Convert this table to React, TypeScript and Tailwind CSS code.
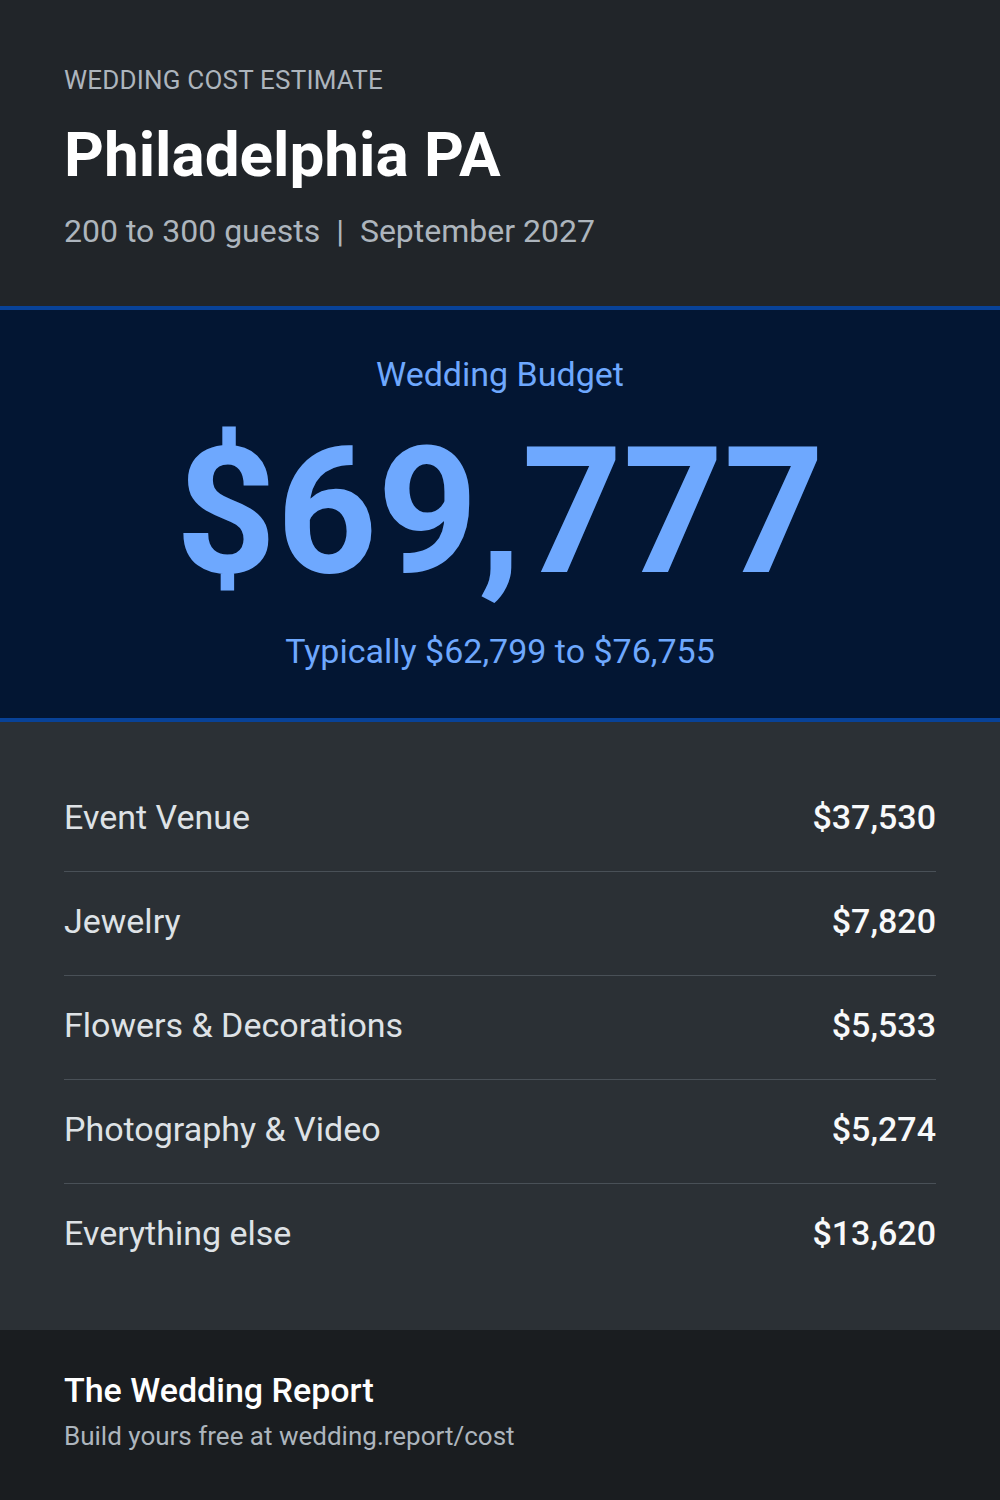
import React from 'react';

const items = [
    { label: 'Event Venue', amount: '$37,530' },
    { label: 'Jewelry', amount: '$7,820' },
    { label: 'Flowers & Decorations', amount: '$5,533' },
    { label: 'Photography & Video', amount: '$5,274' },
    { label: 'Everything else', amount: '$13,620' },
];

const App: React.FC = () => {
    return (
        <div className="w-[1000px] h-[1500px] flex flex-col font-['Roboto',sans-serif] bg-[#212529]">
            <header className="px-16 pt-16 pb-[55px] bg-[#212529]">
                <p className="text-[26px] leading-[32px] tracking-[0.2px] text-[#adb5bd] uppercase">Wedding Cost Estimate</p>
                <h1 className="mt-[23px] text-[62px] leading-[72px] font-bold text-white">Philadelphia PA</h1>
                <p className="mt-5 text-[32px] leading-[40px] text-[#adb5bd]">
                    200 to 300 guests <span className="mx-2">|</span> September 2027
                </p>
            </header>

            <section className="border-y-4 border-[#084298] bg-[#031633] pt-11 pb-[47px] text-center text-[#6ea8fe]">
                <p className="text-[34px] leading-[40px]">Wedding Budget</p>
                <p className="mt-[30px] text-[176px] leading-none font-bold">$69,777</p>
                <p className="mt-[31px] text-[34px] leading-[40px]">Typically $62,799 to $76,755</p>
            </section>

            <section className="flex-1 bg-[#2b3035] px-16 pt-[46px]">
                {items.map((item, i) => (
                    <div
                        key={item.label}
                        className={`flex justify-between items-center pt-[29px] pb-[34px] ${i < items.length - 1 ? 'border-b border-[#495057]' : ''}`}
                    >
                        <span className="text-[34px] leading-[40px] text-[#dee2e6]">{item.label}</span>
                        <span className="text-[34px] leading-[40px] font-medium text-[#f8f9fa]">{item.amount}</span>
                    </div>
                ))}
            </section>

            <footer className="h-[170px] bg-[#1a1d20] px-16 pt-10">
                <p className="text-[34px] leading-[40px] font-medium text-white">The Wedding Report</p>
                <p className="mt-[10px] text-[26px] leading-[32px] text-[#adb5bd]">Build yours free at wedding.report/cost</p>
            </footer>
        </div>
    );
};

export default App;
